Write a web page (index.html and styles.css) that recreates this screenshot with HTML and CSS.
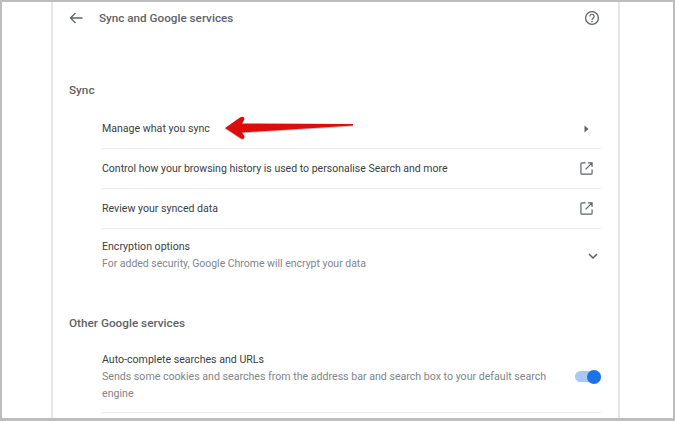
FILE: index.html
```html
<!DOCTYPE html>
<html lang="en">
<head>
<meta charset="utf-8">
<title>Sync and Google services</title>
<link rel="stylesheet" href="styles.css">
</head>
<body>
<div class="frame">
  <main class="card">
    <header class="head">
      <svg class="back" viewBox="0 0 14 12" width="14" height="12"><path d="M13.5 6H1.5M6.5 1L1.5 6l5 5" fill="none" stroke="#5f6368" stroke-width="1.3"/></svg>
      <h1 class="title">Sync and Google services</h1>
      <svg class="help" viewBox="0 0 16 16" width="16" height="16"><circle cx="8" cy="8" r="6.4" fill="none" stroke="#5f6368" stroke-width="1.3"/><path d="M5.9 6.4a2.1 2.1 0 1 1 3.4 1.6c-.8.6-1.3 1-1.3 2" fill="none" stroke="#5f6368" stroke-width="1.2"/><circle cx="8" cy="11.6" r=".8" fill="#5f6368"/></svg>
    </header>

    <h2 class="section first">Sync</h2>
    <div class="list">
      <div class="row">
        <span class="label">Manage what you sync</span>
        <span class="slot"><svg viewBox="0 0 5 8" width="5" height="8"><path d="M0.5 0.5L4.5 4L0.5 7.5Z" fill="#5f6368"/></svg></span>
      </div>
      <div class="row">
        <span class="label narrow">Control how your browsing history is used to personalise Search and more</span>
        <span class="slot"><svg viewBox="0 0 14 14" width="13" height="13"><path d="M6 1H2a1 1 0 0 0-1 1v10a1 1 0 0 0 1 1h10a1 1 0 0 0 1-1V8M8.500 1H13V5.500M13 1L6 8" fill="none" stroke="#5f6368" stroke-width="1.3"/></svg></span>
      </div>
      <div class="row">
        <span class="label">Review your synced data</span>
        <span class="slot"><svg viewBox="0 0 14 14" width="13" height="13"><path d="M6 1H2a1 1 0 0 0-1 1v10a1 1 0 0 0 1 1h10a1 1 0 0 0 1-1V8M8.500 1H13V5.500M13 1L6 8" fill="none" stroke="#5f6368" stroke-width="1.3"/></svg></span>
      </div>
      <div class="row tall">
        <div class="stack">
          <span class="label">Encryption options</span>
          <span class="sub">For added security, Google Chrome will encrypt your data</span>
        </div>
        <span class="slot"><svg viewBox="0 0 10 6" width="10" height="6"><path d="M1 1l4 4 4-4" fill="none" stroke="#5f6368" stroke-width="1.5"/></svg></span>
      </div>
    </div>

    <h2 class="section second">Other Google services</h2>
    <div class="list">
      <div class="row last">
        <div class="stack wide">
          <span class="label">Auto-complete searches and URLs</span>
          <span class="sub long">Sends some cookies and searches from the address bar and search box to your default search engine</span>
        </div>
        <span class="toggle"><span class="knob"></span></span>
      </div>
    </div>

    <svg class="arrow" viewBox="0 0 132 27" width="132" height="27"><path d="M1 14L16 3.500Q20 1.500 20.500 5L18 9.500L129 10V11.500L18 18.500L20.500 22.500Q20.500 26 17 24.500Z" fill="#7a7a7a" opacity=".45" transform="translate(0 1)"/><path d="M1 14L16 3.500Q20 1.500 20.500 5L18 9.500L129 10V11.500L18 18.500L20.500 22.500Q20.500 26 17 24.500Z" fill="#dc0d0d"/></svg>
  </main>
</div>
</body>
</html>
```
FILE: styles.css
```css
* { box-sizing: border-box; }
html, body { margin: 0; height: 100%; }
body { background: #fff; font-family: Roboto, "Liberation Sans", sans-serif; overflow: hidden; }
.frame {
  width: 675px;
  height: 421px;
  border: 2px solid #bdbdbd;
  border-bottom-width: 3px;
  padding: 0 53px 0 49px;
  overflow: hidden;
  background: #fff;
}
.card {
  position: relative;
  height: 100%;
  border-left: 2px solid #e6e6e6;
  border-right: 2px solid #e6e6e6;
  padding: 0 17px 0 16px;
}
.head { display: flex; align-items: center; height: 32px; }
.back { flex: none; }
.title { flex: 1; margin: 0 0 0 16px; font-size: 11.7px; font-weight: 500; color: #5f6368; }
.help { flex: none; margin-right: 1px; }
.section { margin: 0; font-size: 11.75px; font-weight: 500; color: #5f6368; line-height: 14px; }
.section.first { padding-top: 49px; }
.section.second { padding-top: 27px; }
.list { padding-left: 33px; }
.row {
  display: flex;
  align-items: center;
  justify-content: space-between;
  height: 40px;
  border-bottom: 1px solid #ececec;
}
.list .row:first-child { margin-top: 12px; }
.row.tall { height: 60px; border-bottom: 0; align-items: flex-start; padding-top: 10px; }
.list .row.last { height: 72px; margin-top: 11px; }
.stack { display: flex; flex-direction: column; }
.wide { width: 460px; }
.label { font-size: 10.6px; color: #3c4043; line-height: 16px; }
.label.narrow { font-size: 10.53px; }
.sub { font-size: 10.48px; color: #80868b; line-height: 17px; }
.sub.long { font-size: 10.62px; }
.slot { width: 20px; display: flex; justify-content: center; margin-right: 5px; }
.row.tall .slot { padding-top: 14px; margin-right: -2px; }
.toggle { position: relative; width: 26px; height: 11px; border-radius: 6px; background: #a9c8f7; }
.knob { position: absolute; right: 0; top: -1.500px; width: 14px; height: 14px; border-radius: 50%; background: #1a73e8; }
.arrow { position: absolute; left: 171px; top: 112px; }
```
